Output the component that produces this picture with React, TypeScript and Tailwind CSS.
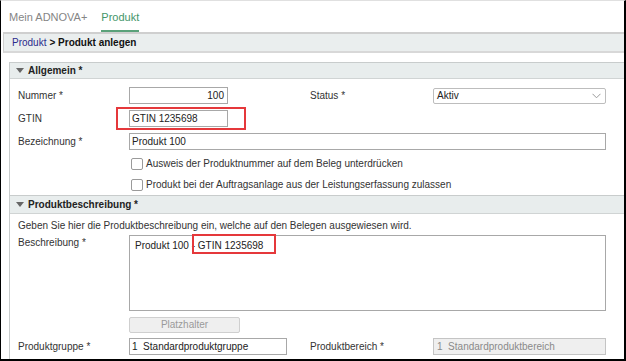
import React from "react";

function Caret() {
  return (
    <svg width="8" height="5" viewBox="0 0 8 5" className="mr-[4px]">
      <path d="M0 0 L8 0 L4 5 Z" fill="#666" />
    </svg>
  );
}

function Chevron() {
  return (
    <svg width="9" height="6" viewBox="0 0 9 6">
      <path d="M0.5 0.8 L4.5 4.8 L8.5 0.8" fill="none" stroke="#999" strokeWidth="1" />
    </svg>
  );
}

function SectionHeader({ title, h }: { title: string; h: string }) {
  return (
    <div className={`flex ${h} items-center border-b border-[#d0d4d4] bg-[#e8eded] pl-[6px] font-bold text-[#222]`}>
      <Caret />
      {title}
    </div>
  );
}

function Checkbox({ label }: { label: string }) {
  return (
    <div className="flex h-[21px] items-center">
      <div className="w-[111px]" />
      <div className="ml-[2px] h-[12px] w-[12px] rounded-[2px] border border-[#9a9a9a] bg-white" />
      <span className="ml-[3px] text-[#333]">{label}</span>
    </div>
  );
}

export default function App() {
  return (
    <div className="flex h-[361px] w-[626px] flex-col overflow-hidden border-r-2 border-b-2 border-l border-black border-t border-t-[#e0e0e0] bg-white font-['Liberation_Sans',Arial,sans-serif] text-[10px] leading-[12px] text-[#222]">
      {/* tabs */}
      <div className="flex h-[31px] pl-[8px] text-[11px]">
        <div className="flex items-center text-[#858585]">Mein ADNOVA+</div>
        <div className="ml-[14px] flex items-center border-b-2 border-[#5aa27a] pt-[2px] text-[#45966a]">
          Produkt
        </div>
      </div>

      {/* breadcrumb */}
      <div className="ml-[2px] flex h-[21px] items-center border-y-2 border-l border-[#cfcfcf] border-b-[#d8d8d8] bg-[#eaeeee] pl-[8px]">
        <span className="text-[#2b2b8c]">Produkt</span>
        <span className="ml-[3px] font-bold text-[#111]">&gt; Produkt anlegen</span>
      </div>

      {/* panel */}
      <div className="mt-[9px] ml-[8px] flex flex-1 flex-col border-t border-l border-[#c8cccc]">
        <SectionHeader title="Allgemein *" h="h-[16px]" />

        <div className="flex flex-col pt-[8px] pl-[8px]">
          <div className="grid h-[17px] grid-cols-[111px_181px_123px_173px] items-center">
            <span className="text-[#333]">Nummer *</span>
            <div className="flex h-[17px] w-[99px] items-center justify-end border border-[#a8a8a8] pr-[3px]">100</div>
            <span className="text-[#333]">Status *</span>
            <div className="flex h-[16px] items-center justify-between rounded-[2px] border border-[#bdbdbd] pr-[4px] pl-[3px]">
              <span>Aktiv</span>
              <Chevron />
            </div>
          </div>

          <div className="mt-[6px] grid h-[17px] grid-cols-[111px_181px_123px_173px] items-center">
            <span className="text-[#333]">GTIN</span>
            <div className="relative h-[17px] w-[99px]">
              <div className="flex h-[17px] w-[99px] items-center border border-[#a8a8a8] pl-[2px]">GTIN 1235698</div>
              <div className="pointer-events-none absolute -top-[3px] -left-[13px] h-[23px] w-[130px] border-2 border-[#e5383b]" />
            </div>
          </div>

          <div className="mt-[6px] grid h-[17px] grid-cols-[111px_477px] items-center">
            <span className="text-[#333]">Bezeichnung *</span>
            <div className="flex h-[17px] items-center border border-[#a8a8a8] pl-[2px]">Produkt 100</div>
          </div>

          <div className="mt-[3px] flex flex-col">
            <Checkbox label="Ausweis der Produktnummer auf dem Beleg unterdrücken" />
            <Checkbox label="Produkt bei der Auftragsanlage aus der Leistungserfassung zulassen" />
          </div>
        </div>

        <div className="border-t border-[#c8cccc]">
          <SectionHeader title="Produktbeschreibung *" h="h-[18px]" />
        </div>

        <div className="flex flex-col pt-[6px] pl-[8px]">
          <div className="text-[#333]">Geben Sie hier die Produktbeschreibung ein, welche auf den Belegen ausgewiesen wird.</div>

          <div className="mt-[3px] grid grid-cols-[111px_477px]">
            <span className="pt-[2px] text-[#333]">Beschreibung *</span>
            <div className="h-[76px] border border-[#a8a8a8] pt-[4px] pl-[5px]">
              Produkt 100 -{" "}
              <span className="relative">
                GTIN 1235698
                <span className="pointer-events-none absolute -top-[6px] -left-[6px] h-[20px] w-[84px] border-2 border-[#e5383b]" />
              </span>
            </div>
          </div>

          <div className="mt-[6px] grid grid-cols-[111px_111px]">
            <span />
            <div className="flex h-[16px] items-center justify-center rounded-[2px] border border-[#cfcfcf] bg-[#efefef] text-[#9a9a9a]">
              Platzhalter
            </div>
          </div>

          <div className="mt-[5px] grid h-[17px] grid-cols-[111px_181px_123px_173px] items-center">
            <span className="text-[#333]">Produktgruppe *</span>
            <div className="flex h-[17px] w-[158px] items-center border border-[#a8a8a8] pl-[2px] whitespace-pre">1  Standardproduktgruppe</div>
            <span className="text-[#333]">Produktbereich *</span>
            <div className="flex h-[17px] items-center border border-[#c4c4c4] bg-[#efefef] pl-[3px] whitespace-pre text-[#8a8a8a]">1  Standardproduktbereich</div>
          </div>
        </div>
      </div>
    </div>
  );
}
